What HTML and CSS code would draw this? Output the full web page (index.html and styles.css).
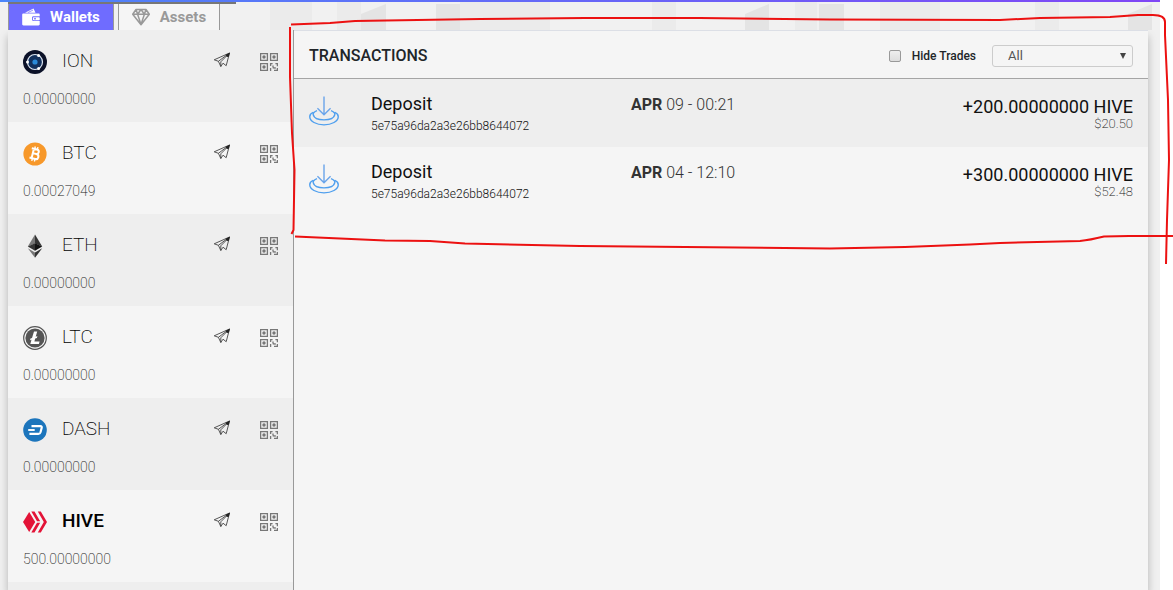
FILE: index.html
```html
<!DOCTYPE html>
<html lang="en">
<head>
    <meta charset="UTF-8">
    <meta name="viewport" content="width=device-width, initial-scale=1.0">
    <title>Wallets</title>
    <link rel="stylesheet" href="styles.css">
</head>
<body>
    <!-- shared icons -->
    <svg class="sprite" aria-hidden="true">
        <symbol id="send" viewBox="0 0 18 16">
            <path d="M16.500 1 1.200 7.800l4.200 1.500L16.500 1 7.800 9.800v4.700l2.200-3.300 3.200 2.500L16.500 1M5.400 9.300l2.400 5.200" fill="none" stroke="#444" stroke-width="0.9" stroke-linejoin="round"/>
            <path d="M16.800.8 12.500 2.800l1.400 2.200 1.900-.2z" fill="#222"/>
        </symbol>
        <symbol id="qr" viewBox="0 0 18 18">
            <path d="M.6.6h6.800v6.800H.6zM10.600.6h6.800v6.800h-6.800zM.6 10.600h6.800v6.800H.6z" fill="none" stroke="#777" stroke-width="1.300"/>
            <circle cx="4" cy="4" r="1.700" fill="#777"/>
            <circle cx="14" cy="4" r="1.700" fill="#777"/>
            <circle cx="4" cy="14" r="1.700" fill="#777"/>
            <path d="M10.600 13v-2.400h2M10.600 15v3M15.400 10.600h2v2.600M17.400 15v2.400H14M12.800 12.500l.5 2.300 2.500.2" fill="none" stroke="#777" stroke-width="1.300"/>
        </symbol>
        <symbol id="deposit" viewBox="0 0 32 32">
            <g fill="none" stroke="#4f9fee" stroke-width="1.500">
                <path d="M16 .5v19M9 13l7 7 7-7" stroke="#6ba5ea"/>
                <path d="M8.500 15.500C5 17 4 18.500 4.500 20c.8 3.300 5.500 5.500 11.500 5.500S26.700 23.300 27.500 20c.5-1.500-.5-3-4-4.500"/>
                <path d="M4.500 17.500C2 18.500.8 20.300.8 22c0 5 7 8.800 15.200 8.800S31.200 27 31.200 22c0-1.700-1.200-3.500-3.700-4.500"/>
            </g>
        </symbol>
    </svg>

    <div class="page">
        <header class="top">
            <svg class="pattern" viewBox="0 0 1160 28" preserveAspectRatio="none" aria-hidden="true">
                <path d="M270 0h42v28h-42zM337 0h24v28h-24zM460 0h90v28h-90zM652 0h24v28h-24zM795 0h22v28h-22zM880 0h60v28h-60zM1035 0h24v28h-24z" fill="#ebebeb"/>
                <path d="M361 12 386 2v26h-25zM436 2h24v26h-24zM745 12 769 2v26h-24zM819 2h25v26h-25zM1128 12l24-10v26h-24z" fill="#e4e4e4"/>
            </svg>
            <nav class="tabs">
                <button class="tab active" type="button">
                    <svg width="18" height="18" viewBox="0 0 18 18" aria-hidden="true">
                        <path d="M1.500 5.500h15c.8 0 1.200.5 1.200 1.200v1.600h-6.200c-1 0-1.500.7-1.500 1.500v1.700c0 .9.600 1.500 1.500 1.500h6.200v3.300c0 .7-.5 1.200-1.200 1.200h-15C.7 17.500.2 17 .2 16.300V6.700c0-.7.5-1.200 1.300-1.200z" fill="#fff"/>
                        <path d="M3 4.700 11.500.5l2 4.200z" fill="#fff"/>
                        <path d="M6 4.500l5-2.400" stroke="#6f6cff" stroke-width=".7"/>
                        <rect x="10.900" y="9.200" width="6.800" height="3" rx=".8" fill="#fff"/>
                        <circle cx="13" cy="10.700" r=".9" fill="#6f6cff"/>
                    </svg>
                    Wallets
                </button>
                <button class="tab" type="button">
                    <svg width="18" height="18" viewBox="0 0 18 18" aria-hidden="true">
                        <path d="M4 1.500h10l3.300 4.700L9 16.700.7 6.200zM.7 6.200h16.600M4 1.500l1.600 4.700L9 1.500l3.400 4.700L14 1.500M5.600 6.200 9 16.500l3.400-10.300" fill="none" stroke="#999" stroke-width="1.500" stroke-linejoin="round"/>
                    </svg>
                    Assets
                </button>
            </nav>
        </header>

        <main class="panel">
            <ul class="wallets">
                <li class="wallet">
                    <div class="wallet-head">
                        <svg class="coin" viewBox="0 0 24 24" aria-hidden="true">
                            <circle cx="12" cy="12" r="12" fill="#0b1128"/>
                            <circle cx="12" cy="12" r="7.500" fill="#12305c" stroke="#dde6f2" stroke-width="1.200"/>
                            <circle cx="12" cy="12" r="2.600" fill="#2a8ad8"/>
                            <g fill="#fff"><circle cx="4.500" cy="12" r="1.500"/><circle cx="15.600" cy="5.500" r="1.500"/><circle cx="15.600" cy="18.500" r="1.500"/></g>
                        </svg>
                        <span class="name">ION</span>
                        <button class="icon-btn" type="button" aria-label="Send ION"><svg class="send"><use href="#send"/></svg></button>
                        <button class="icon-btn" type="button" aria-label="ION address"><svg class="qr"><use href="#qr"/></svg></button>
                    </div>
                    <p class="balance">0.00000000</p>
                </li>
                <li class="wallet">
                    <div class="wallet-head">
                        <svg class="coin" viewBox="0 0 24 24" aria-hidden="true">
                            <circle cx="12" cy="12" r="11.600" fill="#f7982a"/>
                            <g transform="rotate(14 12 12)" fill="none" stroke="#fff">
                                <path d="M7.500 7.200h5.300c3.200 0 3.200 4.500 0 4.500H9.500h3.800c3.600 0 3.600 5.100 0 5.100H7.500M9.700 7.200v9.600" stroke-width="2"/>
                                <path d="M10.500 4.600v2.600M13.200 4.600v2.600M10.500 16.800v2.600M13.200 16.800v2.600" stroke-width="1.400"/>
                            </g>
                        </svg>
                        <span class="name">BTC</span>
                        <button class="icon-btn" type="button" aria-label="Send BTC"><svg class="send"><use href="#send"/></svg></button>
                        <button class="icon-btn" type="button" aria-label="BTC address"><svg class="qr"><use href="#qr"/></svg></button>
                    </div>
                    <p class="balance">0.00027049</p>
                </li>
                <li class="wallet">
                    <div class="wallet-head">
                        <svg class="coin" viewBox="0 0 24 24" aria-hidden="true">
                            <path d="M12 .5v9L4.800 12.500z" fill="#777"/>
                            <path d="M12 .5v9l7.200 3z" fill="#333"/>
                            <path d="M12 9.200v7.600l-7.200-4.300z" fill="#333"/>
                            <path d="M12 9.200v7.600l7.200-4.300z" fill="#111"/>
                            <path d="M4.800 14.200 12 18.400v5.400z" fill="#777"/>
                            <path d="M19.200 14.200 12 18.400v5.400z" fill="#333"/>
                        </svg>
                        <span class="name">ETH</span>
                        <button class="icon-btn" type="button" aria-label="Send ETH"><svg class="send"><use href="#send"/></svg></button>
                        <button class="icon-btn" type="button" aria-label="ETH address"><svg class="qr"><use href="#qr"/></svg></button>
                    </div>
                    <p class="balance">0.00000000</p>
                </li>
                <li class="wallet">
                    <div class="wallet-head">
                        <svg class="coin" viewBox="0 0 24 24" aria-hidden="true">
                            <circle cx="12" cy="12" r="11.300" fill="#f5f5f5" stroke="#555" stroke-width="1.200"/>
                            <circle cx="12" cy="12" r="9.600" fill="#555"/>
                            <path d="M11 5.500h3.200l-1.500 5.300 1.700-.7-.5 1.800-1.700.7-.8 2.900h5.200l-.7 2.500H7.300l1.200-4.300-1.500.6.5-1.800 1.500-.6z" fill="#fff"/>
                        </svg>
                        <span class="name">LTC</span>
                        <button class="icon-btn" type="button" aria-label="Send LTC"><svg class="send"><use href="#send"/></svg></button>
                        <button class="icon-btn" type="button" aria-label="LTC address"><svg class="qr"><use href="#qr"/></svg></button>
                    </div>
                    <p class="balance">0.00000000</p>
                </li>
                <li class="wallet">
                    <div class="wallet-head">
                        <svg class="coin" viewBox="0 0 24 24" aria-hidden="true">
                            <circle cx="12" cy="12" r="11.800" fill="#1c75bc"/>
                            <path d="M8.500 8.200h9c1 0 1.500.6 1.200 1.600l-1.200 4.400c-.3 1-1.200 1.700-2.200 1.700H6.400" fill="none" stroke="#fff" stroke-width="2.200"/>
                            <path d="M5.200 12h6.500" stroke="#fff" stroke-width="1.900"/>
                        </svg>
                        <span class="name">DASH</span>
                        <button class="icon-btn" type="button" aria-label="Send DASH"><svg class="send"><use href="#send"/></svg></button>
                        <button class="icon-btn" type="button" aria-label="DASH address"><svg class="qr"><use href="#qr"/></svg></button>
                    </div>
                    <p class="balance">0.00000000</p>
                </li>
                <li class="wallet selected">
                    <div class="wallet-head">
                        <svg class="coin" viewBox="0 0 24 24" aria-hidden="true">
                            <g fill="#e31337">
                                <path d="M6.200 2 12.200 12 6.200 22 0 12z"/>
                                <path d="M8.300 1.500h3.200l5.700 9.800h-3.200zM14.800 1.500h3L24 12h-3.200z"/>
                                <path d="M14 12.800h3.200L11.500 22.500H8.300zM20.800 12H24l-6.200 10.500h-3z"/>
                            </g>
                        </svg>
                        <span class="name">HIVE</span>
                        <button class="icon-btn" type="button" aria-label="Send HIVE"><svg class="send"><use href="#send"/></svg></button>
                        <button class="icon-btn" type="button" aria-label="HIVE address"><svg class="qr"><use href="#qr"/></svg></button>
                    </div>
                    <p class="balance">500.00000000</p>
                </li>
                <li class="rest"></li>
            </ul>

            <section class="transactions">
                <div class="trans-header">
                    <h1>TRANSACTIONS</h1>
                    <input type="checkbox" id="hideTrades">
                    <label for="hideTrades">Hide Trades</label>
                    <div class="select">
                        <select aria-label="Transaction type">
                            <option>All</option>
                        </select>
                        <svg width="6" height="6" viewBox="0 0 6 6" aria-hidden="true"><path d="M0 0h6L3 6z" fill="#444"/></svg>
                    </div>
                </div>
                <ul class="trans-list">
                    <li class="trans">
                        <svg class="deposit"><use href="#deposit"/></svg>
                        <div>
                            <p class="type">Deposit</p>
                            <p class="txid">5e75a96da2a3e26bb8644072</p>
                        </div>
                        <p class="date"><strong>APR</strong> 09 - 00:21</p>
                        <div class="sum">
                            <p class="amount">+200.00000000 HIVE</p>
                            <p class="usd">$20.50</p>
                        </div>
                    </li>
                    <li class="trans">
                        <svg class="deposit"><use href="#deposit"/></svg>
                        <div>
                            <p class="type">Deposit</p>
                            <p class="txid">5e75a96da2a3e26bb8644072</p>
                        </div>
                        <p class="date"><strong>APR</strong> 04 - 12:10</p>
                        <div class="sum">
                            <p class="amount">+300.00000000 HIVE</p>
                            <p class="usd">$52.48</p>
                        </div>
                    </li>
                </ul>
            </section>
        </main>
    </div>

    <!-- hand drawn marker around the transactions -->
    <svg class="marker" viewBox="0 0 1173 270" preserveAspectRatio="none" aria-hidden="true">
        <path d="M291 24.500 330 23l25-2 125-2 105-1h115l130 1.500L1000 20l40-2 70-1 28-2h15q12 0 12 7v13l3 65 1 60-2 60-1 44"/>
        <path d="M290 27v50l2 56 2.500 37-1 60-2 4"/>
        <path d="M295 236.500 385 240.500l45 .5 35 2.500 115 2.500 250 2.500 75-1.500 65-2.500 30-1.500 80-2q10-1 24-4.500l25-.5h44"/>
    </svg>
</body>
</html>
```
FILE: styles.css
```css
* {
    box-sizing: border-box;
}

body {
    margin: 0;
    height: 100vh;
    overflow: hidden;
    position: relative;
    background-color: #fff;
    font-family: Roboto, "Liberation Sans", sans-serif;
    color: #212529;
}

h1, p, ul {
    margin: 0;
    padding: 0;
}

ul {
    list-style: none;
}

button {
    font-family: inherit;
    cursor: pointer;
}

.sprite {
    position: absolute;
    width: 0;
    height: 0;
}

.page {
    display: flex;
    flex-direction: column;
    min-height: 100vh;
    margin-right: 13px;
    background-color: #f0f0f0;
}

/* top line + tabs */
.top {
    position: relative;
    border-top: 2px solid;
    border-image: linear-gradient(to right, #4c86f9, #8046f5) 1;
    padding: 0 8px;
}

.pattern {
    position: absolute;
    top: 0;
    left: 0;
    width: 100%;
    height: 100%;
    background-color: #f1f1f1;
}

.tabs {
    position: relative;
    display: flex;
    gap: 4px;
}

/* dark line that runs a bit past the tabs */
.tabs::before {
    content: "";
    position: absolute;
    top: 0;
    left: 0;
    width: 228px;
    height: 2px;
    background-color: #777;
}

.tab {
    display: flex;
    align-items: center;
    gap: 10px;
    height: 28px;
    padding: 1px 13px 0;
    border: 1px solid #999;
    border-bottom: none;
    background-color: #f5f5f5;
    color: #999;
    font-size: 15px;
    font-weight: 700;
}

.tab.active {
    background-color: #6f6cff;
    color: #fff;
}

/* main panel */
.panel {
    flex: 1;
    display: flex;
    margin: 0 12px 0 8px;
    background-color: #f5f5f5;
    box-shadow: 0 6px 8px rgba(0, 0, 0, 0.25);
}

.wallets {
    flex: 0 0 25%;
    display: flex;
    flex-direction: column;
}

.wallet {
    height: 92px;
    padding: 16px 15px 0;
}

.wallet:nth-child(odd),
.rest {
    background-color: #eee;
}

.rest {
    flex: 1;
}

.wallet-head {
    display: flex;
    align-items: center;
    height: 28px;
}

.coin {
    width: 24px;
    height: 24px;
    margin-top: 3px;
}

.name {
    flex: 1;
    padding-left: 15px;
    font-size: 19px;
    font-weight: 200;
    color: #000;
}

.selected .name {
    font-weight: 500;
}

.icon-btn {
    display: flex;
    padding: 0;
    border: none;
    background: none;
}

.send {
    width: 18px;
    height: 16px;
    margin-right: 29px;
}

.qr {
    width: 18px;
    height: 18px;
    margin-top: 3px;
}

.balance {
    margin-top: 16px;
    font-size: 14px;
    line-height: 18px;
    font-weight: 200;
    color: #222;
}

/* transactions */
.transactions {
    flex: 1;
    border-left: 1px solid #999;
}

.trans-header {
    display: flex;
    align-items: center;
    height: 49px;
    padding: 2px 15px 0;
    border-top: 1px solid #dcdfe6;
    border-bottom: 1px solid #a5a5a5;
}

.trans-header h1 {
    flex: 1;
    font-size: 16px;
    font-weight: 500;
}

.trans-header input {
    appearance: none;
    width: 12px;
    height: 12px;
    margin: 0 11px 0 0;
    border: 1px solid #999;
    border-radius: 2px;
    background: linear-gradient(#eee, #ddd);
}

.trans-header label {
    font-size: 12px;
    font-weight: 500;
}

.select {
    position: relative;
    margin-left: 16px;
}

.select select {
    appearance: none;
    display: block;
    width: 141px;
    height: 22px;
    padding: 0 15px;
    border: 1px solid #ccc;
    border-radius: 3px;
    background-color: #f5f5f5;
    font-family: inherit;
    font-size: 13px;
    color: #555;
}

.select svg {
    position: absolute;
    top: 8px;
    right: 7px;
    pointer-events: none;
}

.trans {
    display: grid;
    grid-template-columns: 62px 260px 1fr auto;
    height: 68px;
    padding: 14px 15px 0;
}

.trans:nth-child(odd) {
    background-color: #eee;
}

.deposit {
    width: 30px;
    height: 30px;
    margin-top: 3px;
}

.type {
    font-size: 18px;
    line-height: 22px;
    color: #111;
}

.txid {
    font-size: 12px;
    line-height: 22px;
    font-weight: 300;
    color: #111;
}

.date {
    font-size: 16px;
    line-height: 24px;
    font-weight: 300;
    color: #333;
}

.date strong {
    font-weight: 700;
}

.sum {
    padding-top: 3px;
    text-align: right;
}

.amount {
    font-size: 18px;
    line-height: 22px;
    color: #111;
}

.usd {
    font-size: 13px;
    line-height: 12px;
    font-weight: 200;
    color: #222;
}

.marker {
    position: absolute;
    top: 0;
    left: 0;
    width: 100%;
    height: 270px;
    pointer-events: none;
}

.marker path {
    fill: none;
    stroke: #ec1111;
    stroke-width: 2;
    stroke-linejoin: round;
}
```
